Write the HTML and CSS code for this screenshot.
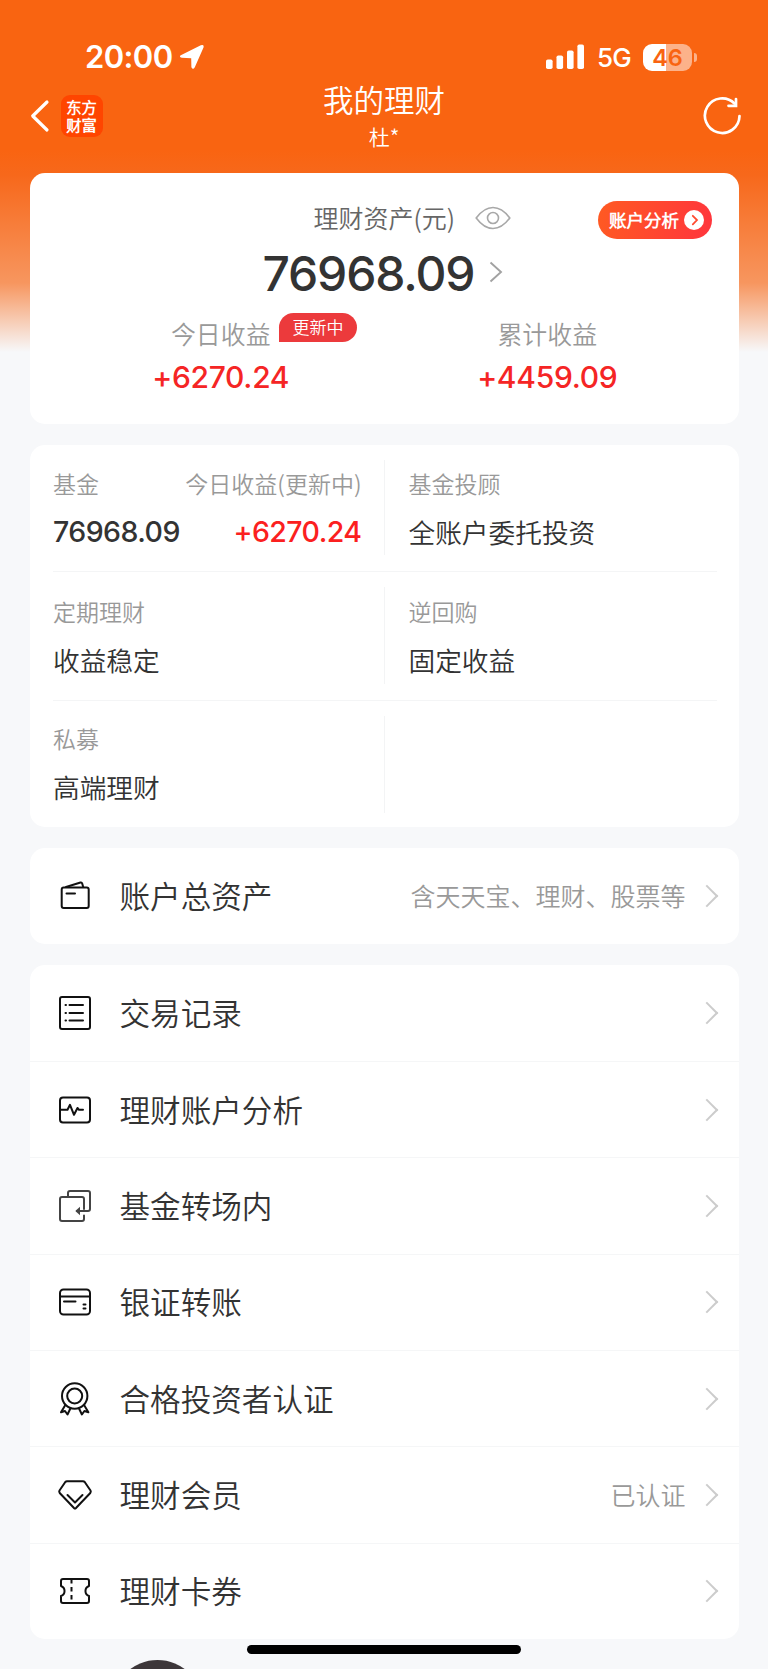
FILE: index.html
```html
<!DOCTYPE html>
<html lang="zh-CN">
<head>
<meta charset="utf-8">
<title>我的理财</title>
<link rel="stylesheet" href="styles.css">
</head>
<body>
<div class="screen">
  <div class="status">
    <span class="time">20:00</span>
    <svg class="locate" width="26" height="26" viewBox="0 0 26 26"><path d="M1.800 11.200L21.800 1.300Q25.300.300 24.500 3.500L15.800 23.300Q14 26.300 12.400 23.300L12.200 14.200 2.800 13.800Q-.300 12.800 1.800 11.200Z" fill="#fff"/></svg>
    <svg class="signal" width="39" height="26" viewBox="0 0 39 26" fill="#fff"><rect x="0" y="15.500" width="6.600" height="9.500" rx="1.800"/><rect x="10.500" y="11.500" width="6.600" height="13.500" rx="1.800"/><rect x="21" y="6.500" width="6.600" height="18.500" rx="1.800"/><rect x="31.400" y=".5" width="6.600" height="24.500" rx="1.800"/></svg>
    <span class="net">5G</span>
    <span class="battery">46</span><i class="nub"></i>
  </div>
  <header class="nav">
    <div class="nav-left">
      <svg width="20" height="34" viewBox="0 0 20 34" fill="none" stroke="#fff" stroke-width="3.200" stroke-linecap="round" stroke-linejoin="round"><path d="M17 3L2.700 17 17 31"/></svg>
      <div class="logo"><span>东方</span><span>财富</span></div>
    </div>
    <div class="nav-title"><h1>我的理财</h1><p>杜*</p></div>
    <svg class="refresh" width="40" height="40" viewBox="0 0 40 40" fill="none" stroke="#fff" stroke-width="2.700" stroke-linecap="round"><path d="M37.500 20A17.300 17.300 0 1 1 32.500 7.500"/><path d="M34 3V9.800H26.500"/></svg>
  </header>

  <section class="card summary">
    <a class="analyse">账户分析<svg width="20" height="20" viewBox="0 0 20 20"><circle cx="10" cy="10" r="10" fill="#fff"/><path d="M8.800 5.800L13 10 8.800 14.400" fill="none" stroke="#ff4a30" stroke-width="1.800" stroke-linecap="round"/></svg></a>
    <div class="caption">理财资产(元)<svg width="36" height="24" viewBox="0 0 36 24" fill="none" stroke="#a8a8a8" stroke-width="1.600"><path d="M1.200 12Q9 1.500 18 1.500T34.800 12Q27 22.500 18 22.500T1.200 12Z"/><circle cx="18" cy="12" r="5.500"/></svg></div>
    <div class="total num">76968.09<svg width="14" height="22" viewBox="0 0 14 22" fill="none" stroke="#a2a2a2" stroke-width="1.900"><path d="M1.500 1.500L12 11 1.500 20.500"/></svg></div>
    <div class="gains">
      <div class="gain"><span class="gain-label">今日收益<em class="tag">更新中</em></span><b class="num">+6270.24</b></div>
      <div class="gain"><span class="gain-label">累计收益</span><b class="num">+4459.09</b></div>
    </div>
  </section>

  <section class="card products">
    <div class="prow">
      <div class="cell pair"><div><label>基金</label><b class="num">76968.09</b></div><div class="end"><label>今日收益(更新中)</label><b class="num up">+6270.24</b></div></div>
      <div class="cell"><label>基金投顾</label><b>全账户委托投资</b></div>
    </div>
    <div class="prow">
      <div class="cell"><label>定期理财</label><b>收益稳定</b></div>
      <div class="cell"><label>逆回购</label><b>固定收益</b></div>
    </div>
    <div class="prow">
      <div class="cell"><label>私募</label><b>高端理财</b></div>
      <div class="cell"></div>
    </div>
  </section>

  <section class="card menu single">
    <a class="item"><svg class="icon" viewBox="0 0 36 36"><rect x="4.700" y="9.500" width="27" height="20.500" rx="2"/><path d="M9 9L23.500 4.500Q24.800 4.200 25.200 5.500L26.200 9M9.500 15.500H18"/></svg><span>账户总资产</span><small>含天天宝、理财、股票等</small><i class="chev"></i></a>
  </section>

  <section class="card menu">
    <a class="item"><svg class="icon" viewBox="0 0 36 36"><rect x="3" y="2" width="30" height="32" rx="2"/><path d="M12.500 10H26M12.500 18H26M12.500 25.500H26M8.500 10H9M8.500 18H9M8.500 25.500H9"/></svg><span>交易记录</span><i class="chev"></i></a>
    <a class="item"><svg class="icon" viewBox="0 0 36 36"><rect x="3" y="5.500" width="30" height="25" rx="3"/><path d="M3.500 17.800H10.500L13 12.800 17 22.800 20.500 16 22 17.800H26"/></svg><span>理财账户分析</span><i class="chev"></i></a>
    <a class="item"><svg class="icon soft" viewBox="0 0 36 36"><path d="M27 21V11Q27 9 25 9H5Q3 9 3 11V31Q3 33 5 33H25Q27 33 27 31V27.500M11 8.500V5Q11 3 13 3H31Q33 3 33 5V21Q33 23 31 23H20"/><path d="M18.300 23L23 18.800V27.200Z" fill="#444" stroke="none"/></svg><span>基金转场内</span><i class="chev"></i></a>
    <a class="item"><svg class="icon" viewBox="0 0 36 36"><rect x="3" y="5.500" width="30" height="25" rx="3.500"/><path d="M3 12.500H33M7 17.500H18.500M26.500 20.500H28.500M26.500 24.500H28.500"/></svg><span>银证转账</span><i class="chev"></i></a>
    <a class="item"><svg class="icon" viewBox="0 0 36 36"><circle cx="17.700" cy="15" r="12.700"/><circle cx="17.700" cy="15" r="7.500"/><path d="M8.200 24.200L4 31.300 8 30 10.500 33.500 13.500 27.300M27.200 24.200L31.400 31.300 27.400 30 24.900 33.500 21.900 27.300"/></svg><span>合格投资者认证</span><i class="chev"></i></a>
    <a class="item"><svg class="icon" viewBox="0 0 36 36"><path d="M10 4.200H26Q27 4.200 27.700 5L33.500 13.500Q34.200 14.800 33.300 16L19 31Q18 32 17 31L2.700 16Q1.800 14.800 2.500 13.500L8.300 5Q9 4.200 10 4.200ZM10.500 18L18 25.500 25.500 18"/></svg><span>理财会员</span><small>已认证</small><i class="chev"></i></a>
    <a class="item"><svg class="icon" viewBox="0 0 36 36"><path d="M6 6H30Q32 6 32 8V13A5.300 5.300 0 0 0 32 23V28Q32 30 30 30H6Q4 30 4 28V23A5.300 5.300 0 0 0 4 13V8Q4 6 6 6Z"/><path d="M14.500 6V30" stroke-dasharray="4.500 3.500" stroke-linecap="butt"/></svg><span>理财卡券</span><i class="chev"></i></a>
  </section>
  <div class="bubble"></div>
  <div class="home"></div>
</div>
</body>
</html>
```
FILE: styles.css
```css
* { box-sizing: border-box; margin: 0; padding: 0; }
body { background: #f7f8fa; }
.screen {
  position: relative; width: 768px; height: 1669px; overflow: hidden;
  padding: 0 29.5px;
  background: linear-gradient(#f96411 0, #f96411 150px, #f7681b 175px, #f7965f 283px, #f7f8fa 352px);
  color: #333; font-family: "Noto Sans CJK SC DemiLight", "Noto Sans CJK SC", sans-serif; font-weight: 350;
}
svg { display: block; flex: none; }
.num { font-family: Inter, "Liberation Sans", sans-serif; font-weight: 500; }

.status { display: flex; align-items: center; height: 82px; padding: 32px 0 0 55.500px; color: #fff; font-family: Inter, sans-serif; }
.time { width: 87px; font-size: 31px; font-weight: 600; letter-spacing: -.6px; line-height: 50px; white-space: nowrap; }
.locate { margin-left: 7px; }
.signal { margin-left: 341px; }
.net { width: 34px; margin-left: 12px; font-size: 26px; font-weight: 500; letter-spacing: -.8px; white-space: nowrap; }
.battery {
  width: 49px; height: 27px; margin-left: 12px; border-radius: 9px; text-align: center;
  background: linear-gradient(90deg, #fff 46%, #fcb28a 46%); color: #f96411; font-size: 23.500px; font-weight: 600; line-height: 27px;
}
.nub { width: 3px; height: 9px; margin-left: 2px; border-radius: 0 4px 4px 0; background: #fcb28a; }

.nav { display: flex; justify-content: space-between; height: 91px; color: #fff; }
.nav-left { display: flex; align-items: center; gap: 11px; width: 120px; height: 67px; }
.logo {
  display: flex; flex-direction: column; align-items: center; justify-content: center; width: 42px; height: 42px; border-radius: 9px;
  background: #ff4500; font-size: 15.300px; font-weight: 900; line-height: 17.500px;
}
.logo span { display: block; height: 17.500px; }
.nav-title { text-align: center; }
.nav-title h1 { margin-top: -2px; font-size: 30.500px; font-weight: 350; line-height: 38px; }
.nav-title p { margin-top: 1px; font-size: 21px; line-height: 34px; }
.refresh { margin: 14px -3px 0 83px; }

.card { position: relative; margin-bottom: 21px; border-radius: 15px; background: #fff; }
.summary { height: 250.500px; padding: 24px 28px 0; }
.analyse {
  position: absolute; top: 28px; right: 27px; display: flex; align-items: center; justify-content: space-between;
  width: 114px; height: 38px; padding: 0 7.500px 2px 11.500px; border-radius: 19px;
  background: linear-gradient(100deg, #ff5a22, #ff353d); color: #fff; font-size: 17.500px; font-weight: 700; white-space: nowrap;
}
.analyse svg { margin-top: 2px; }
.caption { display: flex; align-items: center; gap: 20px; height: 40px; padding-left: 256px; color: #666; font-size: 25px; white-space: nowrap; }
.caption svg { margin-top: 2px; }
.total { display: flex; align-items: center; gap: 15px; height: 72px; padding-left: 205px; font-size: 48px; letter-spacing: -1.150px; }
.total svg { margin-top: -3px; }
.gains { display: flex; }
.gain { display: flex; flex: 1; flex-direction: column; align-items: center; }
.gain-label { position: relative; height: 50px; color: #999; font-size: 24.900px; line-height: 48px; white-space: nowrap; }
.tag {
  position: absolute; top: 4px; left: 108px; width: 78px; height: 29px; border-radius: 15px 15px 15px 0;
  background: #ec3a3c; color: #fff; font-size: 17px; font-style: normal; line-height: 28px; text-align: center;
}
.gain b { height: 36px; color: #f52525; font-size: 30px; line-height: 37px; letter-spacing: -.3px; }

.products { height: 382px; padding: 0 22px 0 23.500px; }
.prow { display: flex; height: 129px; padding: 15px 0 16px; border-bottom: 1px solid #f4f5f6; }
.prow:first-child { height: 127px; }
.prow:last-child { height: 126px; padding-bottom: 14px; border: 0; }
.cell { width: 331px; padding-top: 7px; }
.prow:first-child .cell { padding-top: 6px; }
.prow:last-child .cell { padding-top: 5.500px; }
.cell + .cell { border-left: 1px solid #f3f4f5; padding-left: 23.500px; }
.cell label, .cell b { display: block; white-space: nowrap; }
.cell label { height: 36px; color: #999; font-size: 23px; line-height: 35px; }
.cell b { height: 60px; font-size: 26.700px; font-weight: 350; line-height: 60px; }
.cell b.num { font-size: 28.500px; font-weight: 500; letter-spacing: -.55px; line-height: 59px; }
.cell b.up { color: #fb2020; }
.pair { display: flex; justify-content: space-between; padding-right: 22.500px; }
.end { text-align: right; }

.item { display: flex; align-items: center; height: 96.330px; padding: 0 20px 0 27px; }
.item + .item { border-top: 1.500px solid #f5f6f7; }
.icon { width: 36px; height: 36px; margin-right: 27px; fill: none; stroke: #111; stroke-width: 2; stroke-linejoin: round; stroke-linecap: round; }
.icon.soft { stroke: #444; }
.item span { flex: 1; padding-bottom: 2px; font-size: 30.600px; white-space: nowrap; }
.item small { margin-right: 13px; padding-bottom: 2px; color: #999; font-size: 25px; white-space: nowrap; }
.chev { width: 16px; height: 16px; margin-right: 4px; border: solid #ccc; border-width: 2.500px 2.500px 0 0; transform: rotate(45deg); }
.bubble { position: absolute; left: 112px; top: 1660px; width: 91px; height: 91px; border-radius: 50%; background: #3d373a; }
.home { position: absolute; left: 247px; top: 1645px; width: 274px; height: 9px; border-radius: 5px; background: #000; }
```
